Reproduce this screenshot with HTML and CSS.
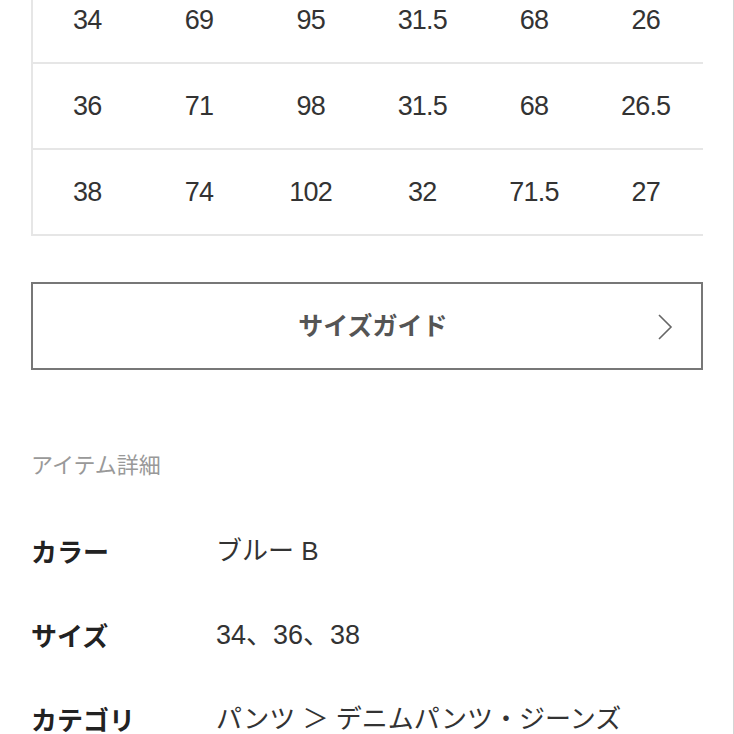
FILE: index.html
```html
<!DOCTYPE html>
<html lang="ja">
  <head>
    <meta charset="UTF-8" />
    <title>アイテム詳細</title>
    <link rel="stylesheet" href="styles.css">
  </head>
  <body>
    <div class="page">
      <!-- Size table (top rows scrolled off) -->
      <div class="size-table">
        <div class="size-row">
          <span>34</span><span>69</span><span>95</span><span>31.5</span><span>68</span><span>26</span>
        </div>
        <div class="size-row">
          <span>36</span><span>71</span><span>98</span><span>31.5</span><span>68</span><span>26.5</span>
        </div>
        <div class="size-row">
          <span>38</span><span>74</span><span>102</span><span>32</span><span>71.5</span><span>27</span>
        </div>
      </div>

      <!-- Size guide button -->
      <a class="guide-button" href="#">
        サイズガイド
        <svg class="chevron" width="16" height="26" viewBox="0 0 16 26">
          <path d="M2 1 L14 13 L2 25" fill="none" stroke="#666" stroke-width="1.6" />
        </svg>
      </a>

      <h2 class="detail-title">アイテム詳細</h2>

      <dl class="detail-list">
        <div class="detail-row">
          <dt>カラー</dt>
          <dd>ブルー B</dd>
        </div>
        <div class="detail-row">
          <dt>サイズ</dt>
          <dd class="num">34、36、38</dd>
        </div>
        <div class="detail-row">
          <dt>カテゴリ</dt>
          <dd>パンツ ＞ デニムパンツ・ジーンズ</dd>
        </div>
      </dl>
    </div>
  </body>
</html>
```

FILE: styles.css
```css
html,
body {
  margin: 0;
  padding: 0;
  background: #fff;
  height: 100%;
  overflow: hidden;
}

body {
  font-family: "Liberation Sans", "Noto Sans CJK JP", sans-serif;
  color: #333;
}

/* page wrapper with the thin right edge */
.page {
  box-sizing: border-box;
  width: 734px;
  min-height: 100%;
  padding: 0 30px 0 31px;
  border-right: 1px solid #d4d4d4;
}

/* size table */
.size-table {
  margin-top: -22px;
  border-left: 2px solid #e6e6e6;
}

.size-row {
  display: grid;
  grid-template-columns: repeat(6, 1fr);
  align-items: center;
  height: 84px;
  border-bottom: 2px solid #e6e6e6;
  font-size: 27px;
  letter-spacing: -0.8px;
  color: #333;
}

.size-row span {
  text-align: center;
  margin-right: 3px;
}

/* size guide button */
.guide-button {
  position: relative;
  display: flex;
  align-items: center;
  justify-content: center;
  box-sizing: border-box;
  height: 88px;
  margin-top: 46px;
  padding: 0 0 4px 12px;
  border: 2px solid #777;
  color: #555;
  font-family: "Noto Sans CJK JP", sans-serif;
  font-size: 25px;
  font-weight: bold;
  text-decoration: none;
}

.guide-button .chevron {
  position: absolute;
  right: 28px;
  top: 30px;
}

/* item details */
.detail-title {
  margin: 78px 0 0;
  font-family: "Noto Sans CJK JP", sans-serif;
  font-size: 22px;
  font-weight: normal;
  line-height: 30px;
  color: #999;
}

.detail-list {
  display: flex;
  flex-direction: column;
  gap: 54px;
  margin: 58px 0 0;
}

.detail-row {
  display: flex;
  line-height: 30px;
  font-size: 26px;
}

.detail-row dt {
  width: 185px;
  flex-shrink: 0;
  font-family: "Noto Sans CJK JP", sans-serif;
  font-weight: bold;
  color: #222;
}

.detail-row dd {
  margin: 0;
  color: #333;
}

.detail-row dd.num {
  font-size: 27px;
}
```
